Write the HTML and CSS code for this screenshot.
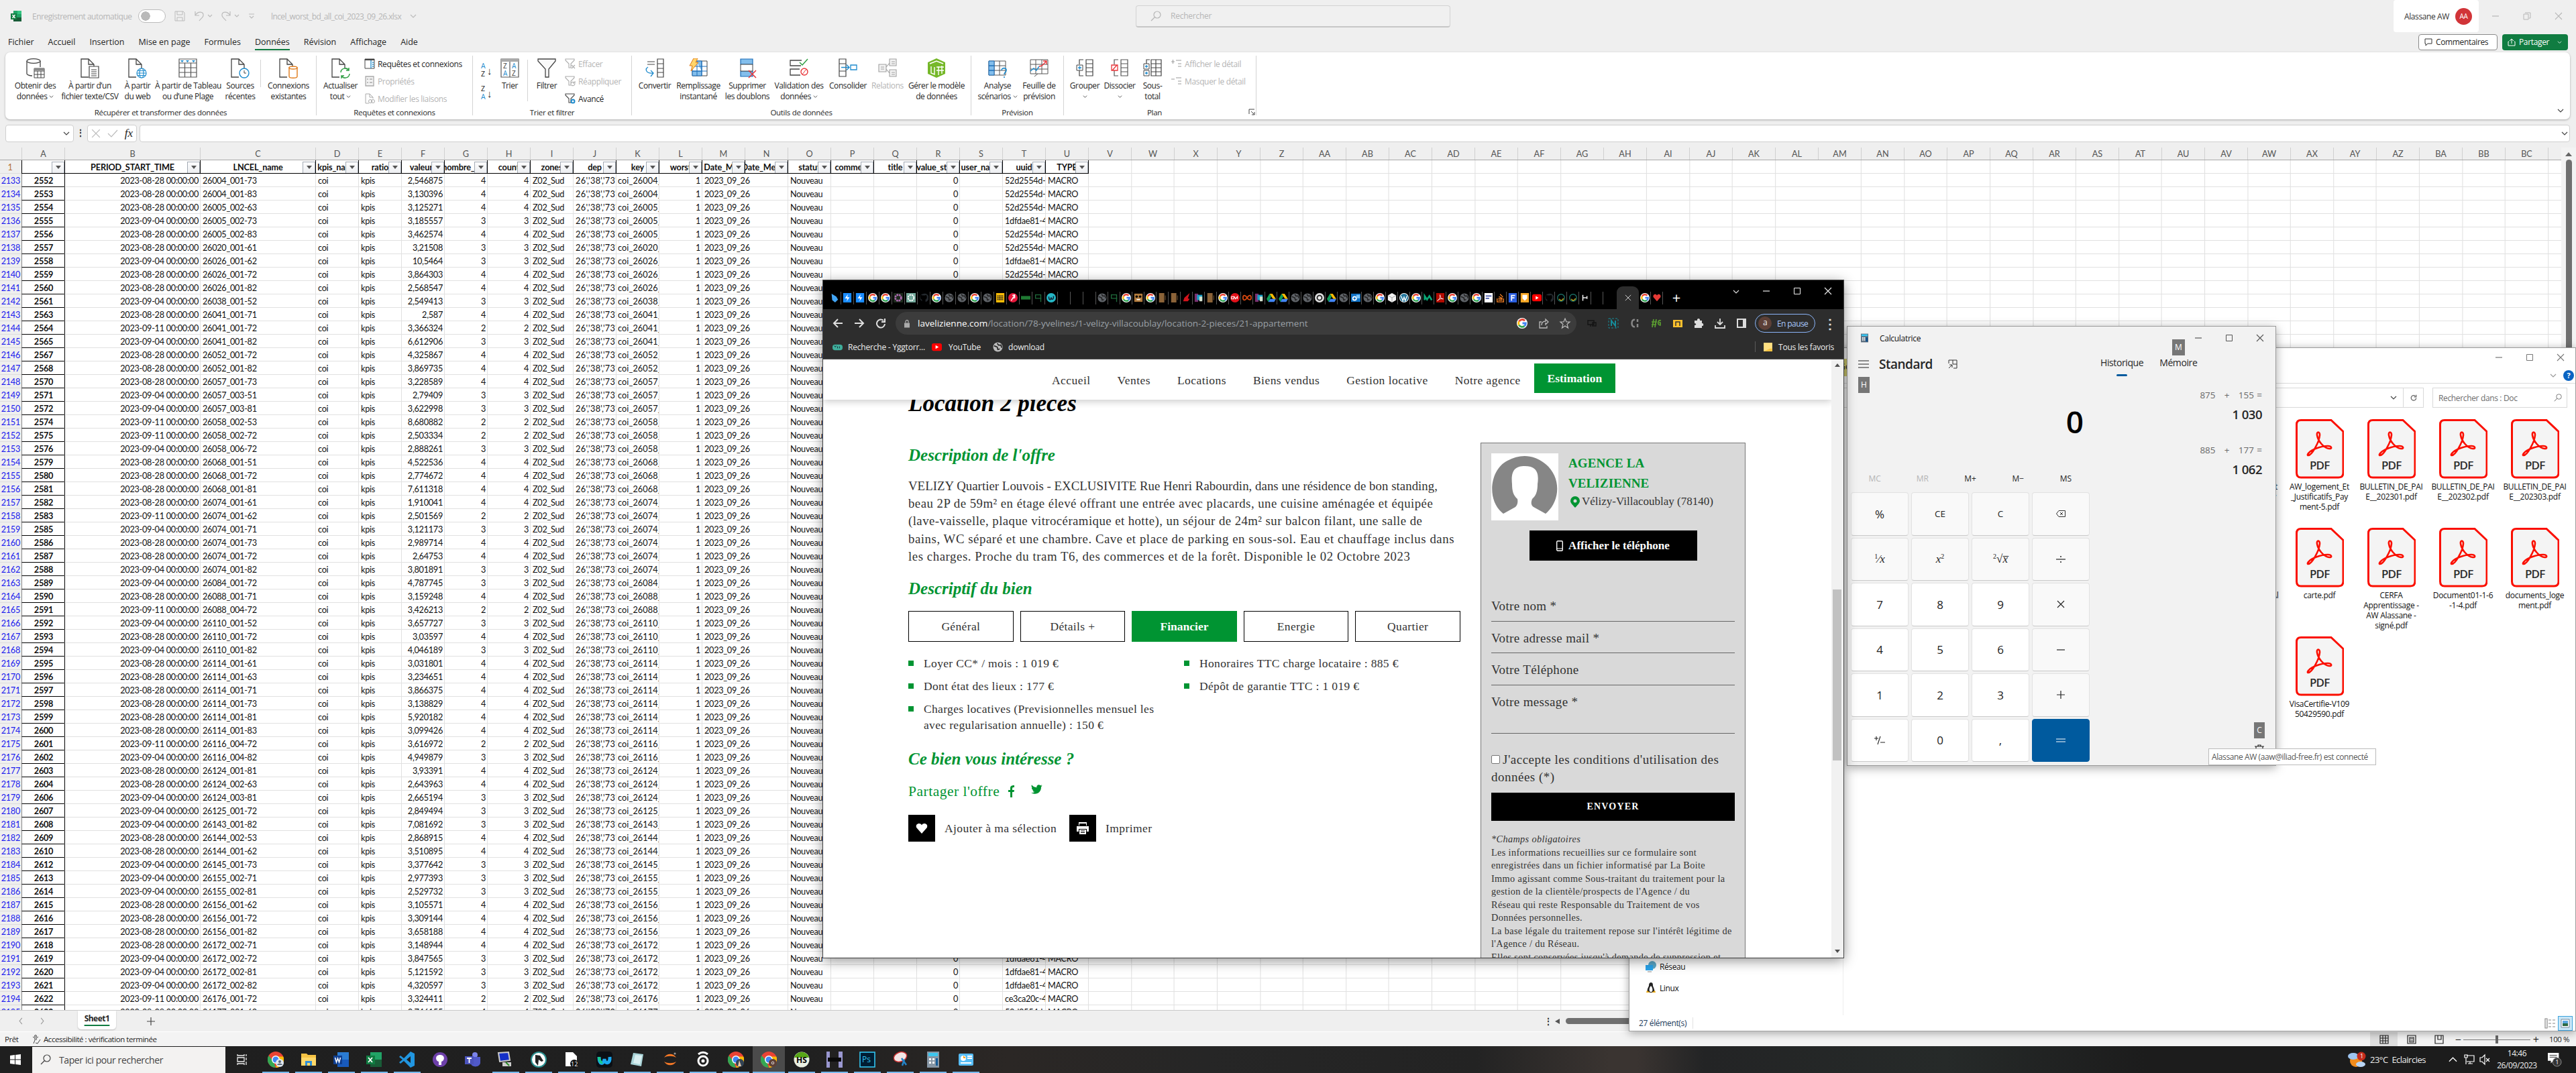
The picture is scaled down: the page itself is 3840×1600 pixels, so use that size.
FILE: index.html
```html
<!DOCTYPE html>
<html lang="fr">
<head>
<meta charset="utf-8">
<title>Bureau</title>
<link rel="stylesheet" href="styles.css">
</head>
<body>
<svg class="defs" aria-hidden="true">
<defs>
<symbol id="chev" viewBox="0 0 10 6"><path d="M1 1l4 4 4-4" fill="none" stroke="currentColor" stroke-width="1.2"/></symbol>
<symbol id="doc" viewBox="0 0 28 30"><path d="M12 28H1V1h11l8 8v6M12 1v8h8" fill="none" stroke="#444" stroke-width="1.3"/></symbol>
<symbol id="getdata" viewBox="0 0 28 30"><path d="M9 26C4 26 1 24 1 23V4m20 9V4" fill="none" stroke="#444" stroke-width="1.3"/><ellipse cx="11" cy="4" rx="10" ry="3.3" fill="#fafafa" stroke="#444" stroke-width="1.3"/><path d="M12 15h15v14H12zM12 19h15M12 24h15M17 19v10M22 19v10" fill="#fff" stroke="#444"/><path d="M12 15h15v3H12z" fill="#888"/></symbol>
<symbol id="csv" viewBox="0 0 28 30"><use href="#doc"/><path d="M13 12h14v17H13z" fill="#fff" stroke="#444" stroke-width="1.2"/><path d="M16 17h8M16 20h8M16 23h8M16 26h8" stroke="#444"/></symbol>
<symbol id="web" viewBox="0 0 28 30"><use href="#doc"/><g fill="#fff" stroke="#1e8bcd" stroke-width="1.2"><circle cx="20" cy="22" r="7"/><ellipse cx="20" cy="22" rx="3" ry="7"/><path d="M13 22h14M14 18.500h12M14 25.500h12" fill="none"/></g></symbol>
<symbol id="table" viewBox="0 0 28 30"><path d="M1 1h26v27H1zM1 7h26M1 14h26M1 21h26M9.500 7v21M18.500 7v21" fill="#fff" stroke="#555" stroke-width="1.2"/><path d="M3 3h5l-2.500 3zM11 3h5l-2.500 3zM20 3h5l-2.500 3z" fill="#1e8bcd"/></symbol>
<symbol id="recent" viewBox="0 0 28 30"><use href="#doc"/><circle cx="20" cy="22" r="7" fill="#fff" stroke="#1e8bcd" stroke-width="1.4"/><path d="M20 18v4h3" fill="none" stroke="#444"/></symbol>
<symbol id="conn" viewBox="0 0 28 30"><use href="#doc"/><path d="M15 14v13c0 3 12 3 12 0V14z" fill="#fff" stroke="#e07b1b" stroke-width="1.4"/><ellipse cx="21" cy="14" rx="6" ry="2" fill="#fff" stroke="#e07b1b" stroke-width="1.4"/></symbol>
<symbol id="refresh" viewBox="0 0 28 30"><use href="#doc"/><path d="M14 21a6.500 6.500 0 0 1 12-3m1 5a6.500 6.500 0 0 1-12 3M26 14v4h-4M15 30v-4h4" fill="none" stroke="#2f9e44" stroke-width="1.5"/></symbol>
<symbol id="sort" viewBox="0 0 28 30"><path d="M1 1h26v27H1zM14 5v23" fill="#fff" stroke="#555" stroke-width="1.2"/><path d="M1 1h26v4H1z" fill="#aaa"/><g font-family="Open Sans" font-size="10"><text x="4" y="15" fill="#444">Z</text><text x="4" y="26" fill="#1e8bcd">A</text><text x="17" y="15" fill="#1e8bcd">A</text><text x="17" y="26" fill="#444">Z</text></g></symbol>
<symbol id="funnel" viewBox="0 0 28 30"><path d="M1 1h26v3L17 16v12h-5V16L1 4z" fill="#fafafa" stroke="#444" stroke-width="1.3"/></symbol>
<symbol id="convert" viewBox="0 0 28 30"><path d="M18 1h9v27h-9zM18 8h9M18 15h9M18 21h9M3 5h11M3 9h11" fill="none" stroke="#444" stroke-width="1.2"/><path d="M4 13c-5 3-3 10 7 9m-3-4l4 4-4 5" fill="none" stroke="#1e8bcd" stroke-width="1.3"/></symbol>
<symbol id="flash" viewBox="0 0 28 30"><path d="M5 4h22v22H5z" fill="#fff" stroke="#444"/><path d="M11 4h8v22H5v-7h14" fill="#83beec" stroke="#1e6fb8"/><path d="M5 12h22M5 19h22M12 4v22M19 4v22" stroke="#1e6fb8"/><path d="M7 0h6l-3 6h4L3 19l2-8H1z" fill="#ffd56b" stroke="#e07b1b"/></symbol>
<symbol id="dups" viewBox="0 0 28 30"><path d="M4 1h18v8H4zM4 19h18v8H4z" fill="#83beec" stroke="#1e6fb8" stroke-width="1.2"/><path d="M4 9h18v10H4z" fill="#fff" stroke="#444"/><path d="M16 18l11 11M27 18L16 29" stroke="#e8363a" stroke-width="1.5"/></symbol>
<symbol id="valid" viewBox="0 0 28 30"><path d="M18 3H1v8h16M15 16H1v9h15" fill="none" stroke="#444" stroke-width="1.3"/><path d="M15 6l4 4 8-9" fill="none" stroke="#2f9e44" stroke-width="1.5"/><circle cx="22" cy="20" r="5" fill="#fff" stroke="#e8363a" stroke-width="1.4"/><path d="M19 24l6-8" stroke="#e8363a"/></symbol>
<symbol id="conso" viewBox="0 0 28 30"><path d="M1 1h10v26H1zM1 8h10M1 19h10" fill="#fff" stroke="#444" stroke-width="1.2"/><path d="M18 10h9v7h-9z" fill="#fff" stroke="#1e8bcd" stroke-width="1.3"/><path d="M4 13.500h12m-4-4l4 4-4 4" fill="none" stroke="#1e8bcd" stroke-width="1.3"/></symbol>
<symbol id="rel" viewBox="0 0 28 30"><path d="M1 9h11v11H1zM17 1h10v10H17zM17 17h10v10H17zM12 13l5-6M12 16l5 6M4 13h5M4 16h5M20 5h5M20 8h5M20 21h5M20 24h5" fill="#f2f2f2" stroke="#a0a0a0" stroke-width="1.1"/></symbol>
<symbol id="model" viewBox="0 0 28 30"><path d="M14 0l13 6v17l-13 6-13-6V6z" fill="#76b82a"/><path d="M4 8l10-4 10 4M6 12v10l5 2V13M17 12v13M22 11v12M14 18h11M14 13h11" fill="none" stroke="#fff" stroke-width="1.4"/></symbol>
<symbol id="whatif" viewBox="0 0 28 30"><path d="M1 4h25v21H1zM1 11h25M1 18h25M9 4v21M17 4v21" fill="#fff" stroke="#555"/><path d="M1 4h8v7H1zM1 11h8v7H1zM1 18h8v7H1z" fill="#83beec" stroke="#1e6fb8"/><path d="M20 18c0-5 8-4 7 0-.5 3-3 3-3 6M24 27v2" fill="none" stroke="#1e8bcd" stroke-width="1.6"/></symbol>
<symbol id="forecast" viewBox="0 0 28 30"><path d="M1 2h26v21H1zM1 9h26M1 16h26M9 2v21M18 2v21M12 23l-5 4" fill="#fff" stroke="#555"/><path d="M1 19l5-4 4 3 4-6" fill="none" stroke="#1e8bcd" stroke-width="1.4"/><path d="M14 12l4-1 7-7m-5 0h5v5" fill="none" stroke="#e8363a" stroke-width="1.4"/></symbol>
<symbol id="group" viewBox="0 0 28 30"><path d="M16 2h10v24H16zM16 8h10M16 14h10M16 20h10M12 2H6v7M6 18v8h6" fill="none" stroke="#444" stroke-width="1.2"/><path d="M2 10h9v8H2z" fill="#fff" stroke="#444"/><path d="M4 14h5M6.500 11.500v5" stroke="#1e8bcd" stroke-width="1.3"/></symbol>
<symbol id="ungroup" viewBox="0 0 28 30"><path d="M16 2h10v24H16zM16 8h10M16 14h10M16 20h10M12 2H6v7M6 18v8h6" fill="none" stroke="#555" stroke-width="1.2"/><path d="M2 10h9v8H2zM3 18l7-8" fill="#fff" stroke="#e8363a" stroke-width="1.3"/></symbol>
<symbol id="subt" viewBox="0 0 28 30"><path d="M12 2h15v24H12zM12 8h15M12 14h15M12 20h15M19 2v24M10 2H5v6" fill="none" stroke="#444" stroke-width="1.2"/><path d="M1 8h8v8H1zM1 18h8v8H1z" fill="#fff" stroke="#444"/><path d="M3 12h4M5 10v4M3 22h4M5 20v4" stroke="#1e8bcd" stroke-width="1.3"/></symbol>
<symbol id="sfun" viewBox="0 0 16 16"><path d="M1 1h13v2L9 8v6H6V8L1 3z" fill="none" stroke="currentColor"/></symbol>
<symbol id="google" viewBox="0 0 16 16"><circle cx="8" cy="8" r="8" fill="#fff"/><g fill="none" stroke-width="2.800"><path d="M12 4.200A5.400 5.400 0 0 0 3.300 5.400" stroke="#ea4335"/><path d="M3.300 5.400a5.400 5.400 0 0 0 0 5.200" stroke="#fbbc05"/><path d="M3.300 10.600a5.400 5.400 0 0 0 8.100 1.600" stroke="#34a853"/><path d="M11.400 12.200A5.400 5.400 0 0 0 13.400 8H8.500" stroke="#4285f4"/></g></symbol>
<symbol id="globe" viewBox="0 0 16 16"><circle cx="8" cy="8" r="7.500" fill="currentColor"/><path d="M2 6l5 2 1 4 3-1M7 2l2 3 4 0 1 4" fill="none" stroke="#222" stroke-width="1.800"/></symbol>
<symbol id="bolt" viewBox="0 0 16 16"><path d="M1 0h14v16H1z" fill="#1a8cff"/><path d="M9 2L4 9h4l-1 5 5-7H8z" fill="#fff"/></symbol>
<symbol id="dart" viewBox="0 0 16 16"><path d="M3 1l8 5 3 5-5 5-5-4z" fill="#42a5f5"/></symbol>
<symbol id="gptd" viewBox="0 0 16 16"><path d="M0 0h16v16H0z" fill="#1d2b1d"/><circle cx="8" cy="8" r="5" fill="none" stroke="#b06ab3" stroke-width="3" stroke-dasharray="3 1"/></symbol>
<symbol id="gptl" viewBox="0 0 16 16"><path d="M0 0h16v16H0z" fill="#74aa9c"/><circle cx="8" cy="8" r="5" fill="none" stroke="#fff" stroke-width="2" stroke-dasharray="3 1"/></symbol>
<symbol id="octo" viewBox="0 0 16 16"><path d="M8 1a7 7 0 0 0-3 13v-3C1 10 2 4 4 3l2 1h4l2-1c2 2 2 7-1 8v4a7 7 0 0 0-3-14z" fill="#24292e"/></symbol>
<symbol id="yel" viewBox="0 0 16 16"><path d="M1 0h14v16H1z" fill="#fbbc05"/><path d="M3 5h10M3 8h10M3 11h10" stroke="#222" stroke-width="2" stroke-dasharray="2 .7"/></symbol>
<symbol id="redp" viewBox="0 0 16 16"><circle cx="8" cy="8" r="8" fill="#e6173a"/><path d="M5 13l6-10M7 4l4-1 0 5-4 1" stroke="#fff" stroke-width="1.600" fill="none"/></symbol>
<symbol id="grn" viewBox="0 0 16 16"><path d="M0 5h16v6H0z" fill="#1f7a33"/></symbol>
<symbol id="grl" viewBox="0 0 16 16"><path d="M13 9H3V3h9v12" fill="none" stroke="#1f6b3b" stroke-width="1.500"/></symbol>
<symbol id="wteal" viewBox="0 0 16 16"><circle cx="8" cy="8" r="8" fill="#25b7c6"/><path d="M4 6c0 8 4 5 4 1 0 5 4 5 4-2" fill="none" stroke="#123" stroke-width="1.800"/></symbol>
<symbol id="bear" viewBox="0 0 16 16"><path d="M1 1h14v14H1z" fill="#b07a3c"/><circle cx="5" cy="6" r="2"/><circle cx="11" cy="6" r="2"/><path d="M5 11h6" stroke="#fff" stroke-width="2"/></symbol>
<symbol id="brown" viewBox="0 0 16 16"><path d="M2 0h9v16H2z" fill="#8b6338"/><path d="M11 4h3v8h-3" fill="#3a2b1b"/></symbol>
<symbol id="flame" viewBox="0 0 16 16"><path d="M13 0L4 8l-2 6h8l3-4-3-1z" fill="#d4141c"/></symbol>
<symbol id="opera" viewBox="0 0 16 16"><circle cx="8" cy="8" r="8" fill="#e3111a"/><path d="M2 6h4v4H2zM7 6l2 4 3-4v4" fill="none" stroke="#fff" stroke-width="1.300"/></symbol>
<symbol id="inf" viewBox="0 0 16 16"><path d="M8 8C4 2 1 4 1 8s3 6 7 0 7-4 7 0-4 5-7 0z" fill="none" stroke="#d9480f" stroke-width="2"/></symbol>
<symbol id="pics" viewBox="0 0 16 16"><path d="M1 1h6v14H1z" fill="#79306f"/><path d="M5 3h9v9H5z" fill="#1aa3c9"/><path d="M9 6h5v8H9z" fill="#d5e3d0"/></symbol>
<symbol id="drive" viewBox="0 0 16 16"><path d="M5 1h5l6 9h-5z" fill="#fbbc05"/><path d="M5 1L0 10l3 5 5-9z" fill="#0f9d58"/><path d="M3 15h10l3-5H6z" fill="#4285f4"/></symbol>
<symbol id="chrome" viewBox="0 0 16 16"><circle cx="8" cy="8" r="8" fill="#ea4335"/><path d="M1 4l5 6 2 6A8 8 0 0 1 1 4z" fill="#34a853"/><path d="M8 16l3-7-1-4h5.500A8 8 0 0 1 8 16z" fill="#fbbc05"/><circle cx="8" cy="8" r="4" fill="#fff"/><circle cx="8" cy="8" r="3" fill="#4285f4"/></symbol>
<symbol id="chromeg" viewBox="0 0 16 16"><circle cx="8" cy="8" r="8" fill="#ddd"/><circle cx="8" cy="8" r="5" fill="#222"/><circle cx="8" cy="8" r="3" fill="#eee"/></symbol>
<symbol id="outl" viewBox="0 0 16 16"><path d="M0 1h16v14H0z" fill="#1072c6"/><circle cx="6" cy="9" r="3" fill="none" stroke="#fff" stroke-width="2"/><path d="M9 3h6v6H9z" fill="#7fc4f5"/></symbol>
<symbol id="box" viewBox="0 0 16 16"><path d="M8 0l7 4v8l-7 4-7-4V4z" fill="#f4f4f4"/><path d="M8 8v8M1 4l7 4 7-4" stroke="#999" fill="none"/></symbol>
<symbol id="wp" viewBox="0 0 16 16"><circle cx="8" cy="8" r="8" fill="#fff"/><circle cx="8" cy="8" r="7" fill="#21759b"/><path d="M3 5l3 8 2-6 2 6 3-8" fill="none" stroke="#fff" stroke-width="1.600"/></symbol>
<symbol id="mgr" viewBox="0 0 16 16"><path d="M2 12V5l4 6 4-6 4 7" fill="none" stroke="#0aa574" stroke-width="3"/></symbol>
<symbol id="acro" viewBox="0 0 16 16"><path d="M1 0h14v16H1z" fill="#b30b00"/><path d="M3 13c4-2 5-6 4.500-10C8 8 10 10 13 10c-4-1-7 0-10 3z" fill="none" stroke="#fff"/></symbol>
<symbol id="white" viewBox="0 0 16 16"><path d="M1 0h14v16H1z" fill="#fff"/><path d="M3 5h10M3 9h6" stroke="#45a" stroke-width="2"/></symbol>
<symbol id="stack" viewBox="0 0 16 16"><path d="M2 9v6h11V9M4 12h7M4 9l7 1M5 6l6 3M7 2l5 5" fill="none" stroke="#f48024" stroke-width="1.500"/></symbol>
<symbol id="fblue" viewBox="0 0 16 16"><path d="M1 0h14v16H1z" fill="#2b5fe0"/><path d="M6 13V4h6M6 8h5" fill="none" stroke="#fff" stroke-width="2"/></symbol>
<symbol id="shield" viewBox="0 0 16 16"><path d="M1 0h14v16H1z" fill="#f9a825"/><path d="M4 3h8v6l-4 4-4-4z" fill="#fff"/></symbol>
<symbol id="yt" viewBox="0 0 16 16"><rect y="2" width="16" height="12" rx="3" fill="#f00"/><path d="M6 5l5 3-5 3z" fill="#fff"/></symbol>
<symbol id="ring" viewBox="0 0 16 16"><circle cx="8" cy="8" r="6" fill="none" stroke="#1b6e63" stroke-width="1.600"/><path d="M5 10c2 4 6 3 7-1" fill="none" stroke="#e0c020" stroke-width="1.500"/></symbol>
<symbol id="hlogo" viewBox="0 0 16 16"><path d="M4 3v10M4 8h6M11 5v5" stroke="#eee" stroke-width="1.800"/></symbol>
<symbol id="heart" viewBox="0 0 16 16"><path d="M8 14L2 7c-2-4 4-7 6-3 2-4 8-1 6 3z" fill="#e53935"/></symbol>
<symbol id="pdf" viewBox="0 0 72 89"><path d="M8 1.500h45l18 17V80q0 7-7 7H8q-6.500 0-6.500-7V8q0-6.500 6.500-6.500z" fill="#f4f4f4" stroke="#fb0f00" stroke-width="3"/><path d="M19 54c5 0 16-19 17-30 .4-6-5-6-4 0 1.500 9 10 19 18 20 5 .5 4-4-2-4-11 0-25 6-28 10-2 2-3 4-1 4z" fill="none" stroke="#fb0f00" stroke-width="2.600"/><text x="36" y="75" text-anchor="middle" font-family="Open Sans" font-size="17" font-weight="600" textLength="30" fill="#2c2c2c">PDF</text></symbol>
<symbol id="back" viewBox="0 0 16 16"><path d="M15 8H2m6-6L2 8l6 6" fill="none" stroke="currentColor" stroke-width="2"/></symbol>
<symbol id="reload" viewBox="0 0 16 16"><path d="M14 9A6 6 0 1 1 12 4M14 1v5H9" fill="none" stroke="currentColor" stroke-width="2"/></symbol>
<symbol id="x" viewBox="0 0 12 12"><path d="M1 1l10 10M11 1L1 11" stroke="currentColor" stroke-width="1.100"/></symbol>
<symbol id="min" viewBox="0 0 12 12"><path d="M1 6h10" stroke="currentColor" stroke-width="1.200"/></symbol>
<symbol id="max" viewBox="0 0 12 12"><path d="M1.500 1.500h9v9h-9z" stroke="currentColor" fill="none"/></symbol>
<symbol id="mag" viewBox="0 0 16 16"><circle cx="10" cy="6" r="5" fill="none" stroke="currentColor" stroke-width="1.200"/><path d="M6.500 9.500L1 15" stroke="currentColor" stroke-width="1.300"/></symbol>
</defs>
</svg>

<div class="desktop">
<section class="excel">
  <header class="xl-title">
    <div class="xl-quick">
      <svg class="xl-logo" viewBox="0 0 16 16"><path d="M4 0h12v16H4z" fill="#21a366"/><path d="M10 0h6v5h-6z" fill="#33c481"/><path d="M4 10h12v6H4z" fill="#185c37"/><path d="M0 4h9v9H0z" fill="#107c41"/><path d="M2.500 6l4 5M6.500 6l-4 5" stroke="#fff" stroke-width="1.400"/></svg>
      <span class="auto">Enregistrement automatique</span>
      <i class="toggle"></i>
      <svg class="q-save" viewBox="0 0 16 16"><path d="M1 1h12l2 2v12H1zM4 1v5h8V1M4 15V10h8v5" fill="none" stroke="#bbb"/></svg>
      <svg class="q-undo" viewBox="0 0 26 16"><path d="M1 1v6h6M1 7C5 0 14 1 13 7c0 3-5 6-6 8M20 6l3 3 3-3" fill="none" stroke="#bbb" stroke-width="1.200"/></svg>
      <svg class="q-redo" viewBox="0 0 26 16"><path d="M13 1v6H7M13 7C9 0 0 1 1 7c0 3 5 6 6 8M20 6l3 3 3-3" fill="none" stroke="#bbb" stroke-width="1.200"/></svg>
      <svg class="q-more" viewBox="0 0 8 8"><path d="M0 1h8M1 4l3 3 3-3" fill="none" stroke="#bbb" stroke-width="1.200"/></svg>
      <span class="fname">lncel_worst_bd_all_coi_2023_09_26.xlsx</span>
      <svg class="c10 gr"><use href="#chev"/></svg>
    </div>
    <div class="xl-search"><svg class="s16"><use href="#mag"/></svg><span>Rechercher</span></div>
    <div class="xl-user"><span>Alassane AW</span><b>AA</b></div>
    <div class="xl-ctl"><svg class="s12"><use href="#min"/></svg><svg class="s12" viewBox="0 0 12 12"><path d="M1 3h7v8H1zM3 1h8v8H9" fill="none" stroke="currentColor"/></svg><svg class="s12"><use href="#x"/></svg></div>
  </header>
  <nav class="xl-tabs">
    <span>Fichier</span><span>Accueil</span><span>Insertion</span><span>Mise en page</span><span>Formules</span><span class="on">Données</span><span>Révision</span><span>Affichage</span><span>Aide</span>
    <div class="xl-share"><button class="cmt"><svg viewBox="0 0 12 12"><path d="M1 1h10v7H5l-3 3V8H1z" fill="none" stroke="#333"/></svg>Commentaires</button><button class="shr"><svg viewBox="0 0 12 12"><path d="M6 1v7M3 4l3-3 3 3M2 5H1v6h10V5h-1" fill="none" stroke="#fff"/></svg>Partager<svg class="c7"><use href="#chev"/></svg></button></div>
  </nav>
  <div class="ribbon">
    <div class="grp g1"><div class="items">
      <div class="b b-get"><svg><use href="#getdata"/></svg>Obtenir des<br>données <svg class="dd"><use href="#chev"/></svg></div>
      <div class="b b-csv"><svg><use href="#csv"/></svg>À partir d’un<br>fichier texte/CSV</div>
      <div class="b b-web"><svg><use href="#web"/></svg>À partir<br>du web</div>
      <div class="b b-tab"><svg><use href="#table"/></svg>À partir de Tableau<br>ou d’une Plage</div>
      <div class="b b-rec"><svg><use href="#recent"/></svg>Sources<br>récentes</div>
      <i class="vs short"></i>
      <div class="b b-con"><svg><use href="#conn"/></svg>Connexions<br>existantes</div>
    </div><p>Récupérer et transformer des données</p></div>
    <div class="grp g2"><div class="items">
      <div class="b b-ref"><svg><use href="#refresh"/></svg>Actualiser<br>tout <svg class="dd"><use href="#chev"/></svg></div>
      <div class="list">
        <span><svg viewBox="0 0 16 16"><path d="M1 1h14v14H1z" fill="#fff" stroke="#444"/><path d="M1 1h14v2H1z" fill="#444"/><path d="M10 3v12M12 6h2M12 9h2M12 12h2" stroke="#1e8bcd" stroke-width="1.300"/></svg>Requêtes et connexions</span>
        <span class="off"><svg viewBox="0 0 16 16"><path d="M2 1h12v14H2zM4 5h2M8 5h4M4 10h2M8 10h4" fill="#f2f2f2" stroke="#aaa" stroke-width="1.300"/></svg>Propriétés</span>
        <span class="off"><svg viewBox="0 0 16 16"><path d="M7 15H2V1h6l5 5v2M8 1v5h5" fill="none" stroke="#aaa"/><circle cx="9" cy="12" r="2.500" fill="none" stroke="#aaa"/><circle cx="13" cy="12" r="2.500" fill="none" stroke="#aaa"/></svg>Modifier les liaisons</span>
      </div>
    </div><p>Requêtes et connexions</p></div>
    <div class="grp g3"><div class="items">
      <div class="az"><div><em>A</em><br>Z</div><u>↓</u><div>Z<br><em>A</em></div><u>↓</u></div>
      <div class="b b-sort"><svg><use href="#sort"/></svg>Trier</div>
      <i class="vs mid"></i>
      <div class="b b-fil"><svg><use href="#funnel"/></svg>Filtrer</div>
      <div class="list">
        <span class="off"><svg viewBox="0 0 16 16"><path d="M1 1h13v2L9 8v6H6V8L1 3zM10 10l5 5M15 10l-5 5" fill="none" stroke="#aaa" stroke-width="1.100"/></svg>Effacer</span>
        <span class="off"><svg viewBox="0 0 16 16"><path d="M1 1h13v2L9 8v6H6V8L1 3zM9 12a3 3 0 0 1 5-2m1 2a3 3 0 0 1-5 2M15 8v3h-3" fill="none" stroke="#aaa" stroke-width="1.100"/></svg>Réappliquer</span>
        <span><svg viewBox="0 0 16 16"><path d="M1 1h13v2L9 8v6H6V8L1 3z" fill="none" stroke="#444" stroke-width="1.100"/><circle cx="12" cy="12" r="2.500" fill="#fff" stroke="#1e8bcd" stroke-width="2"/></svg>Avancé</span>
      </div>
    </div><p>Trier et filtrer</p></div>
    <div class="grp g4"><div class="items">
      <div class="b b-cv"><svg><use href="#convert"/></svg>Convertir</div>
      <div class="b b-fl"><svg><use href="#flash"/></svg>Remplissage<br>instantané</div>
      <div class="b b-du"><svg><use href="#dups"/></svg>Supprimer<br>les doublons</div>
      <div class="b b-va"><svg><use href="#valid"/></svg>Validation des<br>données <svg class="dd"><use href="#chev"/></svg></div>
      <div class="b b-cs"><svg><use href="#conso"/></svg>Consolider</div>
      <div class="b b-rl off"><svg><use href="#rel"/></svg>Relations</div>
      <div class="b b-md"><svg><use href="#model"/></svg>Gérer le modèle<br>de données</div>
    </div><p>Outils de données</p></div>
    <div class="grp g5"><div class="items">
      <div class="b b-an"><svg><use href="#whatif"/></svg>Analyse<br>scénarios <svg class="dd"><use href="#chev"/></svg></div>
      <div class="b b-fe"><svg><use href="#forecast"/></svg>Feuille de<br>prévision</div>
    </div><p>Prévision</p></div>
    <div class="grp g6"><div class="items">
      <div class="b b-gr"><svg><use href="#group"/></svg>Grouper<br><svg class="dd"><use href="#chev"/></svg></div>
      <div class="b b-gr"><svg><use href="#ungroup"/></svg>Dissocier<br><svg class="dd"><use href="#chev"/></svg></div>
      <div class="b b-st"><svg><use href="#subt"/></svg>Sous-<br>total</div>
      <div class="list">
        <span class="off"><svg viewBox="0 0 16 16"><path d="M0 5h5M2.500 2v6M7 3h8M10 8h5M10 12h5" stroke="#999"/></svg>Afficher le détail</span>
        <span class="off"><svg viewBox="0 0 16 16"><path d="M0 5h5M7 3h8M10 8h5M10 12h5" stroke="#999"/></svg>Masquer le détail</span>
      </div>
    </div><p>Plan</p><svg class="launch" viewBox="0 0 10 10"><path d="M1 8V1h8M4 4l5 5M9 5v4H5" fill="none" stroke="#444"/></svg></div>
    <svg class="c10 fold"><use href="#chev"/></svg>
  </div>
  <div class="fbar">
    <div class="nbox"><svg class="c10"><use href="#chev"/></svg></div>
    <span class="dots">⋮</span>
    <div class="fx"><svg class="s14"><use href="#x"/></svg><svg class="s16" viewBox="0 0 16 12"><path d="M1 6l5 5 9-10" fill="none" stroke="#bbb" stroke-width="1.200"/></svg><i>fx</i></div>
    <div class="finput"><svg class="c10"><use href="#chev"/></svg></div>
  </div>
  <div class="sheet">
    <div class="colhead" id="colhead"></div>
    <div class="rows" id="rows"></div>
    <div class="vscroll"><i class="up"></i><i class="thumb"></i></div>
  </div>
  <div class="sheets"><svg class="ar" viewBox="0 0 6 12"><path d="M5 1L1 6l4 5" fill="none" stroke="#999" stroke-width="1.200"/></svg><svg class="ar" viewBox="0 0 6 12"><path d="M1 1l4 5-4 5" fill="none" stroke="#999" stroke-width="1.200"/></svg><b>Sheet1</b><svg class="add" viewBox="0 0 12 12"><path d="M6 0v12M0 6h12" stroke="#444" stroke-width="1.200"/></svg><span class="sdots">⋮</span><i class="left"></i><i class="hthumb"></i></div>
  <footer class="status"><span class="pret">Prêt</span><svg class="acc" viewBox="0 0 14 14"><circle cx="6" cy="2" r="1.500" fill="none" stroke="#444"/><path d="M2 3l3 2v3l-2 5M10 3L7 5v3M6 12l3 1 4-6" fill="none" stroke="#444"/></svg><span class="acct">Accessibilité : vérification terminée</span>
    <div class="zoom"><span class="v on"><svg class="s14" viewBox="0 0 14 14"><path d="M1 1h12v12H1zM1 5h12M1 9h12M5 1v12M9 1v12" fill="none" stroke="#222" stroke-width="1.200"/></svg></span><span class="v"><svg class="s14" viewBox="0 0 14 14"><path d="M1 1h12v12H1zM4 4h6v7H4zM5 6h4M5 9h4" fill="none" stroke="#222" stroke-width="1.200"/></svg></span><span class="v"><svg class="s14" viewBox="0 0 14 14"><path d="M1 1h12v12H1zM5 1v6h5V1" fill="none" stroke="#222" stroke-width="1.200"/></svg></span><span class="mn">−</span><i class="track"></i><span class="pl">+</span><span class="pc">100 %</span></div>
  </footer>
</section>

<section class="explorer">
  <div class="ex-title"><svg class="s12"><use href="#min"/></svg><svg class="s12"><use href="#max"/></svg><svg class="s12"><use href="#x"/></svg></div>
  <div class="ex-help"><em>Gérer</em><svg class="c10"><use href="#chev"/></svg><b>?</b></div>
  <div class="ex-bar"><div class="addr"><svg class="c10"><use href="#chev"/></svg><span><svg class="s10"><use href="#reload"/></svg></span></div><div class="ex-search">Rechercher dans : Doc<svg class="s12"><use href="#mag"/></svg></div></div>
  <div class="ex-body">
    <div class="ex-nav">
      <span><svg viewBox="0 0 16 16"><circle cx="10" cy="6" r="6" fill="#5aa7c7"/><path d="M0 6h11v8H0z" fill="#29a3ea"/><path d="M3 16h6" stroke="#888"/></svg>Réseau</span>
      <span><svg viewBox="0 0 16 16"><path d="M8 0c-3 0-3 4-3 5-2 4-3 6-2 10h10c1-4-1-7-2-10 0-2 0-5-3-5z" fill="#222"/><path d="M8 5c-3 3-3 8-1 9h2c2-1 2-6-1-9z" fill="#fff"/><path d="M2 12l5 3H1zM14 12l-5 3h6z" fill="#e8a50c"/></svg>Linux</span>
    </div>
    <div class="files" id="files"></div>
  </div>
  <div class="ex-status"><span class="cnt">27 élément(s)</span><svg class="s16" viewBox="0 0 16 16"><path d="M1 1h3v14H1zM6 3h4M12 3h4M6 8h4M12 8h4M6 13h4M12 13h4" fill="none" stroke="#888" stroke-width="1.200"/></svg><span class="sel"><svg class="s14" viewBox="0 0 14 14"><path d="M1 1h12v12H1z" fill="#fff" stroke="#789"/><path d="M3 3h8v4H3z" fill="#5aa7e0"/><path d="M3 7h8v4H3z" fill="#2d6b45"/></svg></span></div>
</section>

<section class="calc">
  <div class="ca-title"><svg class="ca-ico" viewBox="0 0 12 14"><path d="M0 0h12v14H0z" fill="#5c6f80"/><path d="M1 1h10v3H1z" fill="#36c5f0"/><path d="M2 6h2v2H2zM5 6h2v2H5zM2 9h2v2H2zM5 9h2v2H5z" fill="#fff"/><path d="M8 6h3v7H8z" fill="#0d4f8c"/></svg><span>Calculatrice</span><svg class="s12 first"><use href="#min"/></svg><svg class="s12"><use href="#max"/></svg><svg class="s12"><use href="#x"/></svg></div>
  <div class="ca-main">
    <div class="ca-left">
      <div class="ca-mode"><svg class="s16" viewBox="0 0 16 12"><path d="M0 1h16M0 6h16M0 11h16" stroke="#222" stroke-width="1.100"/></svg><b>Standard</b><svg class="s14" viewBox="0 0 14 14"><path d="M1 6V1h12v12H8M7 1v6h6M1 13l5-5M2 8h4v4" fill="none" stroke="#333"/></svg></div>
      <div class="ca-disp">0</div>
      <div class="ca-mem"><span class="off">MC</span><span class="off">MR</span><span>M+</span><span>M−</span><span>MS</span></div>
      <div class="keys">
        <span class="op">%</span><span class="op sm">CE</span><span class="op sm">C</span><span class="op"><svg class="s14" viewBox="0 0 14 10"><path d="M4 .5h9.500v9H4L.5 5zM6 3l4 4M10 3L6 7" fill="none" stroke="#333"/></svg></span>
        <span class="op it"><sup>1</sup>⁄x</span><span class="op it">x<sup>2</sup></span><span class="op it"><sup>2</sup>√x̅</span><span class="op"><svg class="s14" viewBox="0 0 14 14"><path d="M0 7h14" stroke="#222" stroke-width="1.200"/><circle cx="7" cy="3" r="1" fill="#222"/><circle cx="7" cy="11" r="1" fill="#222"/></svg></span>
        <span>7</span><span>8</span><span>9</span><span class="op"><svg class="s12"><use href="#x"/></svg></span>
        <span>4</span><span>5</span><span>6</span><span class="op"><svg class="s14" viewBox="0 0 14 14"><path d="M1 7h12" stroke="#222" stroke-width="1.200"/></svg></span>
        <span>1</span><span>2</span><span>3</span><span class="op"><svg class="s14" viewBox="0 0 14 14"><path d="M1 7h12M7 1v12" stroke="#222" stroke-width="1.200"/></svg></span>
        <span><svg class="s16" viewBox="0 0 16 12"><path d="M0 3h6M3 0v6M9 0L5 12M9 9h7" stroke="#222" stroke-width="1.100"/></svg></span><span>0</span><span>,</span><span class="eq"><svg class="s14" viewBox="0 0 14 14"><path d="M0 5h14M0 9h14" stroke="#fff" stroke-width="1.200"/></svg></span>
      </div>
    </div>
    <div class="ca-hist">
      <div class="ca-tabs"><span class="on">Historique</span><span>Mémoire</span></div>
      <p>875 &nbsp; + &nbsp; 155 =</p><strong>1 030</strong>
      <p>885 &nbsp; + &nbsp; 177 =</p><strong>1 062</strong>
    </div>
  </div>
  <svg class="trash" viewBox="0 0 14 14"><path d="M0 3h14M5 3V1h4v2M2 3v11h10V3" fill="none" stroke="#222" stroke-width="1.200"/></svg>
  <i class="key k-m">M</i><i class="key k-h">H</i><i class="key k-c">C</i>
</section>
<div class="tip">Alassane AW (aaw@iliad-free.fr) est connecté</div>

<section class="chrome">
  <div class="tabs" id="tabs"><div class="wc"><svg class="c10"><use href="#chev"/></svg><svg class="s12"><use href="#min"/></svg><svg class="s12"><use href="#max"/></svg><svg class="s12"><use href="#x"/></svg></div></div>
  <div class="tool">
    <svg class="s16"><use href="#back"/></svg><svg class="s16 flip"><use href="#back"/></svg><svg class="s16"><use href="#reload"/></svg>
    <div class="url"><svg class="lock" viewBox="0 0 10 12"><path d="M1 5h8v7H1z" fill="#aaa"/><path d="M3 5V3a2 2 0 0 1 4 0v2" fill="none" stroke="#aaa" stroke-width="1.300"/></svg><span><b>lavelizienne.com</b>/location/78-yvelines/1-velizy-villacoublay/location-2-pieces/21-appartement</span>
      <svg class="s16 g"><use href="#google"/></svg><svg class="s16" viewBox="0 0 16 16"><path d="M5 6H2v9h11v-3M5 11c0-5 3-6 6-6V2l4 4-4 4V7" fill="none" stroke="#bbb" stroke-width="1.300"/></svg><svg class="s16" viewBox="0 0 16 16"><path d="M8 1l2 5h5l-4 3.500 1.500 5.500L8 12l-4.500 3L5 9.500 1 6h5z" fill="none" stroke="#bbb" stroke-width="1.200"/></svg></div>
    <div class="exts">
      <svg class="s14" viewBox="0 0 14 14"><path d="M1 3h9v6H1zM5 9v3M8 6h5v5H8z" fill="none" stroke="#151515" stroke-width="1.500"/></svg>
      <svg class="s16" viewBox="0 0 16 16"><path d="M1 1h14v14H1z" fill="none" stroke="#168c99" stroke-dasharray="3 2"/><path d="M5 12V4l6 8V4" fill="none" stroke="#168c99" stroke-width="2"/></svg>
      <svg class="s14" viewBox="0 0 14 14"><path d="M7 2C1 0 1 14 7 12M11 1v4M11 8v5" fill="none" stroke="#888" stroke-width="2.500"/></svg>
      <svg class="s16" viewBox="0 0 16 16"><path d="M4 2L2 14M8 2L6 14M1 6h8M1 10h7M15 4c-5-2-6 7-1 7V7h-2" fill="none" stroke="#5c9e31" stroke-width="1.700"/></svg>
      <svg class="s14" viewBox="0 0 14 14"><path d="M0 2h14v11H0z" fill="#fbc02d"/><path d="M4 11V5h6v6" fill="none" stroke="#333" stroke-width="1.500"/></svg>
      <svg class="s14" viewBox="0 0 14 14"><path d="M1 3h4c-1-4 5-4 4 0h3v4c3-1 3 5 0 4v3H1v-4c3 0 3-3 0-3z" fill="#ddd"/></svg>
      <svg class="s16" viewBox="0 0 16 16"><path d="M8 1v9M4 6l4 4 4-4M1 11v4h14v-4" fill="none" stroke="#ddd" stroke-width="1.800"/></svg>
      <svg class="s14" viewBox="0 0 14 14"><path d="M1 1h12v12H1z" fill="none" stroke="#ddd" stroke-width="2"/><path d="M9 1h4v12H9z" fill="#ddd"/></svg>
    </div>
    <div class="prof"><i>a</i>En pause</div><span class="menu">⋮</span>
  </div>
  <div class="marks"><svg viewBox="0 0 16 16"><rect y="4" width="16" height="9" rx="4" fill="#3fae9b"/><path d="M3 6l1.500 2L6 6M8 10V7M11 10V7" stroke="#123" fill="none"/></svg><span class="m1">Recherche - Yggtorr...</span><svg><use href="#yt"/></svg><span class="m2">YouTube</span><svg class="lg"><use href="#globe"/></svg><span>download</span>
    <div class="fav"><svg viewBox="0 0 14 14"><path d="M1 1h12v12H1z" fill="#ffe082"/><path d="M10 9h3v4H1" fill="#f6c344"/></svg>Tous les favoris</div></div>
  <div class="page">
    <nav class="site"><span>Accueil</span><span>Ventes</span><span>Locations</span><span>Biens vendus</span><span>Gestion locative</span><span>Notre agence</span><b>Estimation</b></nav>
    <div class="cols">
      <main>
        <h1>Location 2 pièces</h1>
        <h2>Description de l'offre</h2>
        <p class="desc"><span class="l1">VELIZY Quartier Louvois - EXCLUSIVITE Rue Henri Rabourdin, dans une résidence de bon standing,</span><br><span class="l2">beau 2P de 59m² en étage élevé offrant une entrée avec placards, une cuisine aménagée et équipée</span><br><span class="l3">(lave-vaisselle, plaque vitrocéramique et hotte), un séjour de 24m² sur balcon filant, une salle de</span><br><span class="l4">bains, WC séparé et une chambre. Cave et place de parking en sous-sol. Eau et chauffage inclus dans</span><br><span class="l5">les charges. Proche du tram T6, des commerces et de la forêt. Disponible le 02 Octobre 2023</span></p>
        <h2>Descriptif du bien</h2>
        <div class="ptabs"><span>Général</span><span>Détails +</span><span class="on">Financier</span><span>Energie</span><span>Quartier</span></div>
        <div class="feat"><ul><li>Loyer CC* / mois : 1 019 €</li><li>Dont état des lieux : 177 €</li><li>Charges locatives (Previsionnelles mensuel les<br>avec regularisation annuelle) : 150 €</li></ul><ul><li>Honoraires TTC charge locataire : 885 €</li><li>Dépôt de garantie TTC : 1 019 €</li></ul></div>
        <h2>Ce bien vous intéresse ?</h2>
        <div class="share">Partager l'offre<svg class="fb" viewBox="0 0 10 18"><path d="M3 18V10H0V7h3V4c0-3 2-4 6-4v3c-2 0-3 0-3 2v2h3l-.5 3H6v8z" fill="#009432"/></svg><svg class="tw" viewBox="0 0 18 15"><path d="M18 2l-2 1 1-2-2 1c-3-3-7 0-6 3C6 5 3 4 1 1c-1 2 0 4 1 5L1 5.500C1 8 2 9 4 9.500H2.500C3 11 4 12 6 12c-2 1-4 2-6 1 7 5 16 1 16-9z" fill="#009432"/></svg></div>
        <div class="acts"><i><svg class="s18" viewBox="0 0 16 16"><path d="M8 15L1 7c-2-5 5-7 7-3 2-4 9-2 7 3z" fill="#fff"/></svg></i><span class="a1">Ajouter à ma sélection</span><i><svg class="s20" viewBox="0 0 20 20"><path d="M4 6V1h12v5M1 7h18v8h-3v-4H4v4H1z" fill="#fff"/><path d="M5 3h10v3H5z"/><path d="M5 12h10v7H5z" fill="#fff"/><path d="M7 14h6M7 16.500h6" stroke="#000"/></svg></i><span>Imprimer</span></div>
      </main>
      <aside>
        <div class="agent"><svg viewBox="0 0 100 100"><path d="M0 0h100v100H0z" fill="#fff"/><path d="M18 90C-8 70-2 24 24 11c20-11 40-9 57 5 24 20 22 56 0 74l-18-10c-4-3-4-7-2-12 6-5 8-12 8-22 3-20-4-27-19-27S29 26 31 46c0 10 2 17 8 22 1 5 0 9-3 12z" fill="#868686"/></svg><div><b>AGENCE LA<br>VELIZIENNE</b><span><svg viewBox="0 0 14 17"><path d="M7 17C2 12 0 9 0 7a7 7 0 0 1 14 0c0 2-2 5-7 10z" fill="#009432"/><circle cx="7" cy="7" r="2.500" fill="#d9d9d9"/></svg>Vélizy-Villacoublay (78140)</span></div></div>
        <div class="tel"><svg viewBox="0 0 10 16"><rect x=".7" y=".7" width="8.600" height="14.600" rx="1.500" fill="none" stroke="#fff" stroke-width="1.400"/><path d="M0 12h10" stroke="#fff"/></svg>Afficher le téléphone</div>
        <div class="f">Votre nom *</div><div class="f">Votre adresse mail *</div><div class="f">Votre Téléphone</div><div class="f ta">Votre message *</div>
        <div class="cg"><i></i>J'accepte les conditions d'utilisation des<br>données (*)</div>
        <div class="send">ENVOYER</div>
        <p class="legal"><em>*Champs obligatoires</em><br>Les informations recueillies sur ce formulaire sont<br>enregistrées dans un fichier informatisé par La Boite<br>Immo agissant comme Sous-traitant du traitement pour la<br>gestion de la clientèle/prospects de l'Agence / du<br>Réseau qui reste Responsable du Traitement de vos<br>Données personnelles.<br>La base légale du traitement repose sur l'intérêt légitime de<br>l'Agence / du Réseau.<br>Elles sont conservées jusqu'à demande de suppression et</p>
      </aside>
    </div>
    <div class="pscroll"><i class="pu"></i><i class="pt"></i><i class="pd"></i></div>
  </div>
</section>

<footer class="taskbar">
  <span class="start"><svg class="s16" viewBox="0 0 16 16"><path d="M0 2l7-1v6.500H0zM8 1l8-1v7.500H8zM0 8.500h7V15l-7-1zM8 8.500h8V16l-8-1z" fill="#fff"/></svg></span>
  <div class="tsearch"><svg class="s16"><use href="#mag"/></svg>Taper ici pour rechercher</div>
  <span class="tv"><svg class="s16" viewBox="0 0 16 16"><path d="M1 0v2h10V0M1 16v-2h10v2M1 5h10v6H1zM14 0v3M14 5v4M14 11v5" fill="none" stroke="#eee" stroke-width="1.300"/></svg></span>
  <div class="apps">
    <span class="run"><svg viewBox="0 0 24 24"><use href="#chrome"/><circle cx="18" cy="17" r="6" fill="#dfe6ee"/><circle cx="18" cy="15" r="2" fill="#567"/><path d="M14 20c1-3 7-3 8 0z" fill="#567"/></svg></span>
    <span class="run"><svg viewBox="0 0 24 24"><path d="M1 3h8l2 2h12v16H1z" fill="#f6c344"/><path d="M1 9h22v12H1z" fill="#ffd869"/><path d="M7 14h10v7h-3v-4h-4v4H7z" fill="#2f8fd8"/></svg></span>
    <span class="run"><svg viewBox="0 0 24 24"><path d="M6 1h17v22H6z" fill="#2b7cd3"/><path d="M6 12h17v11H6z" fill="#185abd"/><path d="M0 6h13v13H0z" fill="#103f91"/><path d="M2.500 9l2 7 2-6 2 6 2-7" fill="none" stroke="#fff" stroke-width="1.500"/></svg></span>
    <span class="run"><svg viewBox="0 0 24 24"><path d="M6 1h17v22H6z" fill="#21a366"/><path d="M6 12h17v11H6z" fill="#185c37"/><path d="M0 6h13v13H0z" fill="#107c41"/><path d="M3 9l6 7M9 9l-6 7" stroke="#fff" stroke-width="1.800"/></svg></span>
    <span class="run"><svg viewBox="0 0 24 24"><path d="M17 0l6 3v18l-6 3L7 14l-5 4-2-2 5-4-5-4 2-2 5 4zM17 7l-6 5 6 5z" fill="#2196e0"/></svg></span>
    <span><svg viewBox="0 0 24 24"><circle cx="12" cy="12" r="11" fill="#6e40aa"/><path d="M12 5c-8 0-7 9-2 10v5h4v-5c5-1 6-10-2-10z" fill="#fff"/></svg></span>
    <span><svg viewBox="0 0 24 24"><circle cx="15" cy="5" r="4" fill="#7b83eb"/><path d="M8 8h15v9c-1 7-13 7-14 1z" fill="#5059c9"/><path d="M0 7h13v12H0z" fill="#4b53bc"/><path d="M3 10h7M6.500 10v7" stroke="#fff" stroke-width="1.800"/></svg></span>
    <span class="run"><svg viewBox="0 0 24 24"><path d="M1 2l15-1 2 12-15 2z" fill="#1430c8" stroke="#ccc" stroke-width="2"/><path d="M7 16h13v6H7z" fill="#ccc"/><path d="M12 16l5 5" stroke="#2a8c2a" stroke-width="2"/></svg></span>
    <span class="run"><svg viewBox="0 0 24 24"><circle cx="12" cy="12" r="11" fill="#fff" stroke="#2a8f8f" stroke-width="2"/><path d="M7 5l7 1 5 8-3 1-4-3-1 9-4-5z" fill="#222"/></svg></span>
    <span class="run"><svg viewBox="0 0 24 24"><path d="M3 1h11l6 6v15H3z" fill="#fff"/><circle cx="16" cy="18" r="6" fill="#111"/><text x="11" y="22" font-size="9" fill="#fff" font-family="Open Sans">12</text></svg></span>
    <span class="run"><svg viewBox="0 0 24 24"><rect width="24" height="24" rx="5" fill="#0b0f14"/><path d="M4 8c0 12 7 12 8 3 1 9 9 7 8-3" fill="none" stroke="#19a8f0" stroke-width="5"/><path d="M4 8c0 6 3 9 5 8" fill="none" stroke="#17c98b" stroke-width="4"/></svg></span>
    <span class="run"><svg viewBox="0 0 24 24"><path d="M6 2l15 2-3 18-16-3z" fill="#a9d4d8"/><path d="M9 5l10 1-3 13-10-2z" fill="#d9eef0"/></svg></span>
    <span class="run"><svg viewBox="0 0 24 24"><path d="M3 9c4-7 14-7 18 0-5-3-13-3-18 0zM3 15c4 7 14 7 18 0-5 3-13 3-18 0z" fill="#f37726"/><circle cx="19" cy="3" r="1.500" fill="#999"/></svg></span>
    <span class="run"><svg viewBox="0 0 24 24"><circle cx="12" cy="14" r="7" fill="none" stroke="#fff" stroke-width="3"/><circle cx="12" cy="14" r="2.500" fill="#fff"/><path d="M5 4c5-4 9-4 14 0" fill="none" stroke="#fff" stroke-width="3"/></svg></span>
    <span class="run"><svg viewBox="0 0 24 24"><use href="#chrome"/><circle cx="18" cy="17" r="6" fill="#345"/><path d="M15 22l2-9 3 9z" fill="#e9c9a8"/></svg></span>
    <span class="run act"><svg viewBox="0 0 24 24"><use href="#chrome"/><circle cx="18" cy="17" r="6" fill="#5d4037"/><circle cx="18" cy="17" r="1.800" fill="none" stroke="#ddd"/></svg></span>
    <span class="run"><svg viewBox="0 0 24 24"><circle cx="12" cy="12" r="11.500" fill="#e9efe2"/><path d="M1 9a11.500 11.500 0 0 1 22 0z" fill="#58a618"/><text x="4" y="17" font-size="12" font-weight="700" font-family="Open Sans">HS</text></svg></span>
    <span class="run"><svg viewBox="0 0 24 24"><path d="M0 0h5v9h13V0h6v24h-6v-9H5v9H0z" fill="#9a97d0"/><path d="M2 9h20v6H2z" fill="#0a0a0a"/></svg></span>
    <span class="run"><svg viewBox="0 0 24 24"><rect x="1" y="1" width="22" height="22" fill="#001d33" stroke="#31c5f0" stroke-width="1.600"/><text x="4" y="16" font-size="12" fill="#31c5f0" font-family="Open Sans">Ps</text></svg></span>
    <span class="run"><svg viewBox="0 0 24 24"><ellipse cx="12" cy="8" rx="10" ry="7" fill="#f3e6e6" stroke="#c33" stroke-width="1.500" transform="rotate(-20 12 8)"/><path d="M14 10l7 10M18 12l-3 9" stroke="#2583c5" stroke-width="2.500"/></svg></span>
    <span class="run"><svg viewBox="0 0 24 24"><path d="M3 0h18v24H3z" fill="#8796a5"/><path d="M5 2h14v5H5z" fill="#3ec6ee"/><path d="M6 10h3v3H6zM11 10h3v3h-3zM6 15h3v3H6zM11 15h3v3h-3z" fill="#fff"/><path d="M16 10h3v11h-3z" fill="#155c98"/></svg></span>
    <span class="run"><svg viewBox="0 0 24 24"><rect x="1" y="3" width="22" height="18" rx="2" fill="#58bdf5"/><circle cx="8" cy="10" r="4" fill="#fff"/><path d="M8 6v4h4z" fill="#f39c12"/><path d="M14 7h7M14 10h7M4 17h16" stroke="#fff" stroke-width="2"/></svg></span>
  </div>
  <div class="tray">
    <svg class="wx" viewBox="0 0 26 24"><circle cx="12" cy="14" r="9" fill="#f28c1c"/><ellipse cx="8" cy="7" rx="8" ry="5" fill="#9ec5f0"/><ellipse cx="19" cy="19" rx="7" ry="4" fill="#b9d4f3"/><circle cx="20" cy="7" r="6.500" fill="#c42b1c"/><text x="18" y="10" font-size="9" fill="#fff" font-family="Open Sans">1</text></svg>
    <span class="temp">23°C&nbsp; Eclaircies</span>
    <svg class="t1" viewBox="0 0 14 8"><path d="M1 7l6-6 6 6" fill="none" stroke="#fff" stroke-width="1.400"/></svg>
    <svg class="t2 s16" viewBox="0 0 16 16"><path d="M4 2h11v9H4M9 11v3M6 14h7M1 1h4v4H1zM3 5v10" fill="none" stroke="#fff" stroke-width="1.200"/></svg>
    <svg class="t3 s16" viewBox="0 0 16 16"><path d="M1 5h3l4-4v14l-4-4H1zM10 6l5 5M15 6l-5 5" fill="none" stroke="#fff" stroke-width="1.200"/></svg>
    <div class="clock">14:46<br>26/09/2023</div>
    <svg class="nt" viewBox="0 0 22 24"><path d="M0 1h18v13h-9l-4 4v-4H0z" fill="#fff"/><path d="M3 5h12M3 8h12" stroke="#222"/><circle cx="15" cy="16" r="7" fill="#333" stroke="#999"/><text x="12.500" y="20" font-size="10" fill="#fff" font-family="Open Sans">1</text></svg>
  </div>
</footer>
</div>
<script src="app.js"></script>
</body>
</html>
```
FILE: styles.css
```css
* { box-sizing: border-box; }
html { overflow: hidden; }
body { margin: 0; height: 1600px; background: #fff; font-family: "Open Sans", "Noto Sans", sans-serif; font-size: 12px; color: #262626; overflow: hidden; }
.defs { position: absolute; width: 0; height: 0; }
svg { display: block; flex: none; overflow: visible; }
button { font: inherit; }
.desktop { position: relative; width: 3840px; height: 1600px; overflow: hidden; }
.s10 { width: 10px; height: 10px; } .s12 { width: 12px; height: 12px; } .s14 { width: 14px; height: 14px; }
.s16 { width: 16px; height: 16px; } .s18 { width: 18px; height: 18px; } .s20 { width: 20px; height: 20px; }
.c10 { width: 10px; height: 6px; color: #444; } .c7 { width: 7px; height: 4px; } .gr { color: #bbb; }

/* spreadsheet window */
.excel { display: flex; flex-direction: column; width: 3840px; height: 1560px; background: #efefef; }
.xl-title { display: flex; height: 48px; align-items: center; color: #b6b6b6; letter-spacing: -.25px; flex: none; }
.xl-quick { display: flex; align-items: center; width: 1693px; padding-left: 16px; }
.xl-logo { width: 16px; height: 16px; }
.auto { width: 151px; margin-left: 16px; white-space: nowrap; letter-spacing: -.5px; }
.toggle { width: 41px; height: 20px; margin-left: 7px; border: 1px solid #bbb; border-radius: 10px; background: radial-gradient(circle at 10px 9px, #b9b9b9 6.5px, #fff 7px); }
.q-save { width: 16px; height: 16px; margin-left: 13px; }
.q-undo, .q-redo { width: 26px; height: 16px; margin-left: 14px; }
.q-more { width: 8px; height: 8px; margin-left: 15px; }
.fname { width: 201px; margin: 0 6px 0 25px; white-space: nowrap; letter-spacing: -.6px; }
.xl-search { display: flex; align-items: center; width: 469px; height: 33px; padding-left: 21px; gap: 14px; border: 1px solid #d2d2d2; border-bottom: 2px solid #c6c6c6; border-radius: 4px; background: #f0f0f0; }
.xl-user { display: flex; align-items: center; width: 127px; height: 48px; margin-left: 1406px; padding-left: 16px; gap: 6px; background: #fff; color: #333; border-radius: 4px; letter-spacing: -.4px; }
.xl-user b { width: 25px; height: 25px; border-radius: 50%; background: #d13438; color: #fff; font-weight: 400; font-size: 10px; text-align: center; line-height: 25px; }
.xl-user span { width: 70px; white-space: nowrap; }
.xl-ctl { display: flex; gap: 35px; margin-left: 19px; }
.xl-tabs { display: flex; height: 30px; padding-left: 12px; gap: 21px; line-height: 30px; font-size: 12.5px; flex: none; }
.xl-tabs .on { position: relative; }
.xl-tabs .on::after { content: ""; position: absolute; left: 0; right: 0; bottom: 3px; height: 2px; background: #107c41; }
.xl-share { display: flex; gap: 7px; margin: 3px 12px 0 auto; }
.xl-share button { display: flex; align-items: center; gap: 5px; height: 24px; padding: 0 8px; border-radius: 4px; font-size: 12px; letter-spacing: -.35px; }
.xl-share button svg:first-child { width: 12px; height: 12px; }
.cmt { width: 118px; border: 1px solid #8a8a8a; background: #fff; color: #262626; }
.shr { width: 98px; border: 0; background: #107c41; color: #fff; }
.shr .c7 { margin-left: 7px; }
.ribbon { display: flex; width: 3823px; height: 100px; margin-left: 8px; background: #fff; border-radius: 7px; box-shadow: 0 1px 3px rgba(0,0,0,.3); flex: none; }
.grp { position: relative; height: 89px; margin-top: 5px; border-right: 1px solid #d4d4d4; }
.grp p { margin: 0; text-align: center; line-height: 14px; font-size: 11.5px; letter-spacing: -.3px; }
.grp .items { display: flex; align-items: flex-start; height: 78px; }
.g1 { width: 464px; } .g1 .items { padding-left: 8px; }
.g2 { width: 233px; }
.g3 { width: 237px; } .g4 { width: 506px; } .g4 .items { padding-left: 2px; }
.g5 { width: 138px; } .g5 .items { padding-left: 6px; }
.g6 { width: 287px; } .g6 .items { padding-left: 5px; } .g6 p { padding-right: 16px; }
.b { padding-top: 4px; text-align: center; line-height: 16px; white-space: nowrap; font-size: 12px; letter-spacing: -.4px; }
.b > svg { width: 28px; height: 30px; margin: 0 auto 3px; }
.b > .dd { display: inline-block; width: 7px; height: 4px; margin: 0; vertical-align: 2px; color: #333; }
.b-get { width: 73px; } .b-csv { width: 90px; } .b-web { width: 52px; } .b-tab { width: 98px; } .b-rec { width: 58px; } .b-con { width: 80px; }
.b-ref { width: 71px; } .b-sort { width: 50px; } .b-fil { width: 54px; }
.b-cv { width: 64px; } .b-fl { width: 66px; } .b-du { width: 80px; } .b-va { width: 74px; } .b-cs { width: 64px; margin-left: 4px; } .b-rl { width: 48px; margin-left: 3px; } .b-md { width: 92px; margin-left: 3px; }
.b-an { width: 66px; } .b-fe { width: 58px; } .b-gr { width: 52px; } .b-st { width: 46px; }
.off { color: #b4b4b4; }
.vs { width: 1px; background: #d4d4d4; margin: 6px 1px 0; } .short { height: 41px; } .mid { height: 62px; }
.list { display: flex; flex-direction: column; letter-spacing: -.35px; white-space: nowrap; margin-top: -1px; }
.list span { display: flex; align-items: center; gap: 4px; height: 26px; }
.list svg { width: 16px; height: 16px; }
.g6 .list { margin-left: 5px; }
.az { display: grid; grid-template-columns: 9px 8px; width: 30px; padding: 9px 0 0 12px; row-gap: 8px; font-size: 10.5px; line-height: 12px; }
.az em { font-style: normal; color: #1e8bcd; } .az u { text-decoration: none; font-size: 15px; line-height: 26px; }
.launch { position: absolute; right: 1px; bottom: 0; width: 10px; height: 10px; }
.fold { margin: 84px 9px 0 auto; }
.fbar { display: flex; height: 26px; margin: 8px 9px 0 8px; flex: none; }
.nbox, .fx, .finput { background: #fff; border: 1px solid #cfcfcf; border-radius: 4px; display: flex; align-items: center; }
.nbox { width: 102px; justify-content: flex-end; padding-right: 5px; }
.dots { width: 20px; text-align: center; line-height: 24px; font-weight: 700; }
.fx { width: 74px; justify-content: space-around; color: #bbb; }
.fx i { font: italic 17px "Liberation Serif", serif; color: #222; }
.finput { flex: 1; margin-left: 4px; justify-content: flex-end; padding-right: 2px; }
.sheet { position: relative; height: 1286px; margin-top: 8px; overflow: hidden; flex: none; font-family: Lato, "Open Sans", sans-serif; font-size: 12.7px; color: #111; }
.colhead { display: flex; height: 19px; padding-left: 32px; border-bottom: 1px solid #a8a8a8; width: 3818px; overflow: hidden; }
.colhead span { width: 64px; flex: none; text-align: center; line-height: 19px; color: #555; border-left: 1px solid #d0d0d0; }
.colhead .wB { width: 202px; } .colhead .wC { width: 172px; } .colhead .end { width: 20px; }
.rows { width: 3818px; height: 1267px; overflow: hidden; background: repeating-linear-gradient(90deg, #e1e1e1 0 1px, transparent 1px 64px) 22px 0, repeating-linear-gradient(180deg, transparent 0 19px, #e1e1e1 19px 20px) 0 0, #fff; }
.row { display: flex; height: 20px; letter-spacing: -.28px; line-height: 21px; width: 1623px; background: #fff; }
.row > * { width: 64px; flex: none; overflow: hidden; white-space: nowrap; padding: 0 2px 0 3px; border-bottom: 1px solid #e1e1e1; border-left: 1px solid #e1e1e1; }
.row > .n { width: 32px; background: #efefef; color: #2020ee; border-left: 0; text-align: right; padding: 0 2px 0 0; border-bottom-color: #ddd; }
.row > .a { font-weight: 700; text-align: center; border-bottom-color: #000; border-left-color: #888; }
.row > .d { width: 202px; border-left-color: #000; }
.row > .c { width: 172px; }
.r { text-align: right; }
.row > .j { letter-spacing: .35px; }
.row > .k { letter-spacing: .1px; padding-left: 2px; }
.row > .m { width: 128px; }
.row > .last { border-right: 1px solid #e1e1e1; width: 65px; }
.row.head { font-weight: 700; line-height: 21px; }
.row.head > .h { position: relative; display: flex; justify-content: center; border-color: #000; padding: 0; letter-spacing: -.15px; }
.row.head > .h::after { content: ""; position: absolute; right: 0; top: 2px; width: 17px; height: 17px; border: 1px solid #a3aab4; background: linear-gradient(#fcfcfd, #eceef1); }
.row.head > .h::before { content: ""; position: absolute; z-index: 1; right: 5px; top: 8px; border: 4px solid transparent; border-top: 5px solid #555; }
.row.head > .n { color: #b5723c; font-weight: 400; text-align: center; }
.vscroll { position: absolute; right: 0; top: 0; width: 22px; height: 1286px; background: #f3f3f3; }
.vscroll .up { position: absolute; left: 6px; top: 7px; border: 5px solid transparent; border-bottom: 6px solid #666; border-top: 0; }
.vscroll .thumb { position: absolute; left: 7px; top: 18px; width: 9px; height: 700px; border-radius: 5px; background: #6f6f6f; }
.sheets { display: flex; height: 32px; border-top: 1px solid #c9c9c9; align-items: center; padding-left: 28px; flex: none; }
.sheets .ar { width: 6px; height: 11px; margin-right: 26px; }
.sheets b { width: 57px; height: 28px; margin: -3px 0 0 24px; background: #fff; text-align: center; line-height: 24px; border-radius: 0 0 5px 5px; box-shadow: 0 1px 2px #bbb; letter-spacing: -.5px; text-decoration: underline #107c41 2px; text-underline-offset: 5px; }
.sheets .add { margin-left: 46px; width: 12px; height: 12px; }
.sdots { margin-left: 2071px; width: 6px; font-weight: 700; }
.sheets .left { border: 4px solid transparent; border-right: 7px solid #555; border-left: 0; margin-left: 10px; }
.hthumb { width: 800px; height: 9px; margin-left: 9px; background: #6f6f6f; border-radius: 5px; }
.status { display: flex; height: 22px; border-top: 1px solid #fff; background: #f3f3f3; align-items: center; padding-left: 7px; letter-spacing: -.45px; font-size: 11.5px; flex: none; }
.pret { width: 40px; } .acc { width: 14px; height: 14px; margin-right: 4px; }
.zoom { display: flex; align-items: center; margin-left: auto; height: 21px; padding-right: 8px; }
.v { width: 41px; height: 21px; display: flex; align-items: center; justify-content: center; } .v.on { background: #dedede; }
.mn, .pl { width: 16px; font-size: 16px; text-align: center; }
.track { width: 100px; height: 12px; background: linear-gradient(#666, #666) 48px 0/4px 12px no-repeat, linear-gradient(#777, #777) 0 6px/100px 1px no-repeat; }
.pc { margin-left: 12px; width: 32px; white-space: nowrap; }

/* file explorer */
.explorer { position: absolute; left: 2428px; top: 518px; width: 1412px; height: 1020px; background: #fff; border: 1px solid #9c9c9c; box-shadow: 0 2px 12px rgba(0,0,0,.35); display: flex; flex-direction: column; }
.ex-title { display: flex; justify-content: flex-end; gap: 34px; padding: 8px 16px 0 0; height: 30px; color: #777; }
.ex-help { display: flex; justify-content: flex-end; align-items: center; height: 24px; border-bottom: 1px solid #dcdcdc; padding: 0 2px 0 310px; gap: 10px; margin-top: -1px; }
.ex-help em { margin: -24px auto 0 0; background: #dcd774; font-style: normal; height: 26px; line-height: 24px; padding: 0 3px; }
.ex-help b { width: 16px; height: 16px; border-radius: 50%; background: #0a63c2; color: #fff; text-align: center; line-height: 16px; font-size: 11px; }
.ex-help .c10 { color: #999; }
.ex-bar { display: flex; height: 46px; padding: 6px 12px 10px 310px; gap: 13px; }
.addr { flex: 1; display: flex; border: 1px solid #d9d9d9; justify-content: flex-end; align-items: center; height: 30px; }
.addr span { width: 30px; height: 28px; margin-left: 9px; border-left: 1px solid #d9d9d9; display: flex; align-items: center; justify-content: center; color: #666; }
.ex-search { width: 201px; height: 30px; border: 1px solid #d9d9d9; display: flex; align-items: center; justify-content: space-between; padding: 0 7px 0 8px; color: #6d6d6d; letter-spacing: -.35px; }
.ex-body { display: flex; flex: 1; }
.ex-nav { width: 319px; border-right: 1px solid #eee; display: flex; flex-direction: column; justify-content: flex-end; padding: 0 0 25px 24px; color: #111; letter-spacing: -.4px; }
.ex-nav span { display: flex; align-items: center; gap: 5px; height: 32px; } .ex-nav svg { width: 16px; height: 16px; }
.files { display: grid; grid-template-columns: repeat(5, 107px); grid-auto-rows: 162px; margin-left: 549px; padding-top: 7px; align-content: start; color: #111; letter-spacing: -.3px; line-height: 15px; text-align: center; white-space: nowrap; }
.files svg { width: 72px; height: 89px; margin: 0 auto 4px; }
.ex-status { display: flex; align-items: center; height: 23px; padding: 0 4px 0 14px; color: #1c3c5c; letter-spacing: -.35px; }
.cnt { border-right: 1px solid #e2e2e2; padding-right: 9px; margin-right: auto; }
.sel { width: 22px; height: 22px; margin-left: 4px; background: #c8e6f7; border: 1px solid #3ba1dc; display: flex; align-items: center; justify-content: center; }

/* calculator */
.calc { position: absolute; left: 2753px; top: 486px; width: 640px; height: 656px; background: #f2f2f2; border: 1px solid #9a9a9a; box-shadow: 0 3px 14px rgba(0,0,0,.35); }
.ca-title { display: flex; align-items: center; height: 34px; padding: 0 17px 0 20px; color: #555; letter-spacing: -.3px; }
.ca-title span { margin-left: 17px; color: #111; } .ca-ico { width: 11px; height: 14px; }
.ca-title .first { margin-left: auto; } .ca-title .s12 + .s12 { margin-left: 34px; }
.ca-main { display: flex; }
.ca-left { width: 361px; padding-left: 5px; }
.ca-mode { display: flex; align-items: center; height: 44px; padding-left: 11px; } .ca-mode .s16 { height: 12px; }
.ca-mode b { font-size: 19px; font-weight: 600; margin: 0 21px 0 15px; width: 82px; letter-spacing: -.5px; }
.ca-disp { height: 127px; line-height: 126px; font-size: 46px; font-weight: 600; text-align: right; padding-right: 9px; color: #000; }
.ca-mem { display: flex; height: 42px; align-items: center; font-size: 12px; } .ca-mem span { width: 71.5px; text-align: center; }
.keys { display: grid; grid-template-columns: repeat(4, 1fr); grid-auto-rows: 64.5px; gap: 3px 4px; }
.keys span { background: #fff; border: 1px solid #e2e2e2; border-bottom-color: #c9c9c9; border-radius: 4px; display: flex; align-items: center; justify-content: center; font-size: 17px; color: #222; }
.keys .op { background: #f9f9f9; } .keys .sm { font-size: 13.5px; } .keys .eq { background: #005a9e; border-color: #005a9e; }
.keys .it { font-family: "Liberation Serif", serif; font-style: italic; } .keys sup { font-size: 10px; margin-top: -8px; font-style: normal; }
.ca-hist { width: 277px; padding-right: 20px; text-align: right; }
.ca-tabs { display: flex; gap: 24px; height: 44px; padding-left: 16px; line-height: 40px; font-size: 14px; letter-spacing: -.4px; margin-bottom: 12px; }
.ca-tabs .on { position: relative; } .ca-tabs .on::after { content: ""; position: absolute; left: 24px; bottom: 4px; width: 16px; height: 3px; border-radius: 2px; background: #005a9e; }
.ca-hist p { margin: 0; height: 26px; line-height: 24px; font-size: 13.5px; color: #6a6a6a; word-spacing: .9px; }
.ca-hist strong { display: block; height: 56px; line-height: 30px; font-size: 18.5px; font-weight: 600; letter-spacing: -.5px; }
.key { position: absolute; background: #767676; color: #fff; font-style: normal; text-align: center; height: 24px; line-height: 24px; }
.k-m { left: 484px; top: 19px; width: 19px; } .k-h { left: 16px; top: 75px; width: 17px; } .k-c { left: 606px; top: 590px; width: 16px; }
.trash { position: absolute; left: 607px; top: 623px; width: 14px; height: 14px; }
.tip { position: absolute; left: 3292px; top: 1116px; width: 250px; height: 25px; background: #fff; border: 1px solid #bbb; color: #575757; line-height: 23px; padding-left: 4px; white-space: nowrap; letter-spacing: -.4px; }

/* browser window */
.chrome { position: absolute; left: 1227px; top: 418px; width: 1521px; height: 1010px; background: #fff; box-shadow: 0 4px 18px rgba(0,0,0,.45), 0 0 0 1px #555; display: flex; flex-direction: column; overflow: hidden; }
.tabs { display: flex; height: 43px; background: #000; padding: 9px 0 0 8px; flex: none; }
.fi { width: 19px; height: 34px; padding: 8px 0 8px 2px; background: linear-gradient(#555, #555) right 8px/1px 19px no-repeat; }
.fi svg { width: 14px; height: 18px; color: #5f6368; }
.fi.nn { width: 18px; }
.tabs .act { width: 33px; height: 34px; margin-left: 20px; background: #2d2d2d; border-radius: 9px 9px 0 0; color: #ddd; display: flex; align-items: center; justify-content: center; }
.tabs .new { width: 30px; color: #fff; font-size: 22px; font-weight: 400; text-align: center; line-height: 33px; margin-left: 5px; }
.wc { order: 9; margin: 0 17px 0 auto; display: flex; gap: 34px; color: #eee; padding-top: 1px; } .wc .c10 { color: #ddd; margin-top: 4px; }
.tool { display: flex; height: 42px; padding: 0 0 0 14px; background: #2d2d2d; align-items: center; gap: 16px; color: #e0e0e0; letter-spacing: -.1px; flex: none; }
.flip { transform: scaleX(-1); }
.url { display: flex; align-items: center; width: 1015px; height: 34px; border-radius: 17px; background: #3c3c3c; color: #9aa0a6; padding: 0 9px 0 12px; font-size: 13.5px; gap: 16px; margin-left: -2px; }
.url span { margin-left: -5px; letter-spacing: 0; } .url b { color: #fff; font-weight: 400; } .url .g { margin-left: auto; } .lock { width: 10px; height: 13px; }
.exts { display: flex; gap: 17px; align-items: center; width: 242px; }
.prof { width: 90px; height: 28px; margin-left: -8px; border: 1px solid #8ab4f8; border-radius: 14px; color: #a8c7fa; display: flex; align-items: center; gap: 8px; padding-left: 4px; letter-spacing: -.6px; white-space: nowrap; }
.prof i { width: 20px; height: 20px; border-radius: 50%; background: #5d4037; color: #eee; text-align: center; line-height: 18px; font-style: normal; }
.menu { font-size: 20px; font-weight: 700; margin-left: -4px; }
.marks { display: flex; height: 33px; background: #2d2d2d; border-bottom: 1px solid #555; color: #eee; align-items: center; padding: 0 14px 4px; letter-spacing: -.2px; flex: none; }
.marks svg { width: 15px; height: 15px; margin-right: 8px; color: #bbb; } .m1 { width: 125px; } .m2 { width: 66px; margin-left: 2px; }
.fav { margin-left: auto; display: flex; align-items: center; border-left: 1px solid #5a5a5a; padding-left: 11px; height: 16px; }
.page { position: relative; flex: 1; overflow: hidden; font-family: "Liberation Serif", serif; color: #333; letter-spacing: .35px; }
.site { position: relative; z-index: 1; display: flex; width: 1503px; height: 60px; padding: 6px 0 0 341px; background: #fff; box-shadow: 0 3px 10px rgba(0,0,0,.2); font-size: 17.5px; line-height: 50px; gap: 40px; letter-spacing: .45px; }
.site b { width: 121px; height: 44px; margin-left: -20px; background: #009432; color: #fff; text-align: center; line-height: 44px; letter-spacing: 0; }
.cols { display: flex; padding-left: 127px; margin-top: -14px; }
main { width: 823px; }
h1 { margin: 0; font: italic bold 35px/40px "Liberation Serif", serif; color: #000; letter-spacing: 0; }
h2 { margin: 0; font: italic bold 25px/30px "Liberation Serif", serif; color: #009432; letter-spacing: 0; }
h1 + h2 { margin-top: 42px; }
.desc { margin: 18px 0 20px; font-size: 18.8px; line-height: 26.2px; white-space: nowrap; }
.l1 { letter-spacing: .05px; } .l2 { letter-spacing: .48px; } .l3 { letter-spacing: .44px; } .l4 { letter-spacing: .56px; } .l5 { letter-spacing: .57px; }
.ptabs { display: flex; gap: 10px; margin-top: 18px; font-size: 17.5px; }
.ptabs span { flex: 1; height: 46px; border: 1px solid #000; text-align: center; line-height: 44px; } .ptabs .on { background: #009432; border-color: #009432; color: #fff; font-weight: 700; letter-spacing: 0; }
.feat { display: flex; margin: 20px 0 24px; font-size: 17.5px; line-height: 24px; height: 116px; }
.feat ul { list-style: none; margin: 0; padding: 0; width: 411px; white-space: nowrap; } .feat li { position: relative; padding-left: 23px; margin-bottom: 10px; }
.feat li::before { content: ""; position: absolute; left: 0; top: 8px; width: 8px; height: 8px; background: #009432; }
.share { display: flex; align-items: center; height: 30px; margin: 18px 0 20px; color: #009432; font-size: 21.5px; letter-spacing: .5px; } .fb { width: 10px; height: 18px; margin-left: 13px; } .tw { width: 17px; height: 15px; margin: -8px 0 0 24px; }
.acts { display: flex; align-items: center; font-size: 17.5px; letter-spacing: .42px; } .acts i { width: 40px; height: 40px; background: #000; display: flex; align-items: center; justify-content: center; margin-right: 14px; } .a1 { width: 186px; white-space: nowrap; }
aside { width: 395px; height: 900px; margin: 78px 0 0 30px; background: #d9d9d9; border: 1px solid #777; padding: 15px; }
.agent { display: flex; gap: 15px; } .agent > svg { width: 100px; height: 100px; }
.agent b { display: block; color: #009432; font-size: 19px; line-height: 30px; letter-spacing: .1px; } .agent span { display: flex; align-items: center; gap: 3px; font-size: 17px; line-height: 24px; white-space: nowrap; padding-left: 3px; letter-spacing: 0; } .agent span svg { width: 14px; height: 17px; }
.tel { width: 250px; height: 45px; margin: 15px auto 43px; background: #000; color: #fff; display: flex; align-items: center; justify-content: center; gap: 8px; font-size: 17px; font-weight: 600; letter-spacing: 0; } .tel svg { width: 10px; height: 16px; }
.f { height: 47.5px; border-bottom: 1px solid #666; font-size: 19px; line-height: 49px; } .ta { height: 72.5px; }
.cg { margin-top: 26px; font-size: 19px; line-height: 26px; white-space: nowrap; letter-spacing: .5px; } .cg i { display: inline-block; width: 13px; height: 13px; border: 1px solid #767676; border-radius: 2px; background: #fff; margin-right: 4px; }
.send { height: 42px; margin-top: 10px; background: #000; color: #fff; font-size: 14px; font-weight: 700; text-align: center; line-height: 42px; letter-spacing: 1.2px; }
.legal { margin: 18px 0 0; font-size: 14.3px; line-height: 19.5px; white-space: nowrap; }
.pscroll { position: absolute; right: 0; top: 0; width: 18px; height: 100%; background: #f1f1f1; z-index: 2; }
.pt { position: absolute; left: 2px; top: 343px; width: 13px; height: 255px; background: #c1c1c1; }
.pu, .pd { position: absolute; left: 5px; border: 4px solid transparent; } .pu { top: 6px; border-bottom: 5px solid #505050; border-top: 0; } .pd { bottom: 7px; border-top: 5px solid #505050; border-bottom: 0; }

/* taskbar */
.taskbar { display: flex; align-items: center; width: 3840px; height: 40px; background: linear-gradient(90deg, #1f1f1f 0, #202020 1200px, #2b2725 1500px, #262626 1800px, #232323 2200px, #3a3431 2400px, #3a3431 2440px, #232425 2540px, #262a29 2900px, #1c1c1c 3200px); color: #eee; }
.start { width: 48px; padding-left: 15px; }
.tsearch { display: flex; align-items: center; gap: 12px; width: 288px; height: 39px; padding-left: 12px; background: #f3f2f1; color: #444; font-size: 14px; letter-spacing: -.4px; }
.tv { width: 51px; padding-left: 17px; }
.apps { display: flex; gap: 1px; }
.apps span { width: 48px; height: 40px; display: flex; align-items: center; justify-content: center; } .apps svg { width: 24px; height: 24px; }
.apps .run { background: linear-gradient(#76b9ed, #76b9ed) 4px 38px/40px 2px no-repeat; }
.apps .act { background: linear-gradient(#76b9ed, #76b9ed) 0 38px/48px 2px no-repeat, #4b4b4b; }
.tray { display: flex; align-items: center; margin-left: auto; width: 340px; white-space: nowrap; font-size: 13px; letter-spacing: -.4px; }
.wx { width: 26px; height: 24px; } .temp { width: 93px; margin-left: 7px; letter-spacing: -.5px; }
.t1 { width: 13px; height: 8px; margin-left: 24px; } .t2 { margin-left: 10px; } .t3 { margin-left: 7px; }
.clock { width: 62px; margin-left: 9px; text-align: center; font-size: 12px; line-height: 18px; } .nt { width: 20px; height: 24px; margin-left: 15px; }
```
FILE: app.js
```javascript
const cols = [];
for (let i = 0; i < 55; i++) cols.push(i < 26 ? String.fromCharCode(65 + i) : String.fromCharCode(64 + Math.floor(i / 26)) + String.fromCharCode(65 + i % 26));
document.getElementById('colhead').innerHTML = cols.map(c => `<span class="w${c}">${c}</span>`).join('') + '<span class="end"></span>';

// index, day, cell name, value, count, hits (when it differs)
const data = `2552 08-28 26004_001-73 2,546875 4
2553 08-28 26004_001-83 3,130396 4
2554 08-28 26005_002-63 3,125271 4
2555 09-04 26005_002-73 3,185557 3
2556 08-28 26005_002-83 3,462574 4
2557 08-28 26020_001-61 3,21508 3
2558 09-04 26026_001-62 10,5464 3
2559 08-28 26026_001-72 3,864303 4
2560 08-28 26026_001-82 2,568547 4
2561 09-04 26038_001-52 2,549413 3
2563 08-28 26041_001-71 2,587 4
2564 09-11 26041_001-72 3,366324 2
2565 09-04 26041_001-82 6,612906 3
2567 08-28 26052_001-72 4,325867 4
2568 08-28 26052_001-82 3,869735 4
2570 08-28 26057_001-73 3,228589 4
2571 09-04 26057_003-51 2,79409 3
2572 09-04 26057_003-81 3,622998 3
2574 09-11 26058_002-53 8,680882 2
2575 09-11 26058_002-72 2,503334 2
2576 09-04 26058_006-72 2,888261 3
2579 08-28 26068_001-51 4,522536 4
2580 08-28 26068_001-72 2,774672 4
2581 08-28 26068_001-81 7,611318 4
2582 08-28 26074_001-61 1,910041 4
2583 09-11 26074_001-62 2,501569 2
2585 09-04 26074_001-71 3,121173 3
2586 08-28 26074_001-73 2,989714 4
2587 08-28 26074_001-72 2,64753 4
2588 09-04 26074_001-82 3,801891 3
2589 09-04 26084_001-72 4,787745 3
2590 08-28 26088_001-71 3,159248 4
2591 09-11 26088_004-72 3,426213 2
2592 09-04 26110_001-52 3,657727 3
2593 08-28 26110_001-72 3,03597 4
2594 09-04 26110_001-82 4,046189 3
2595 08-28 26114_001-61 3,031801 4
2596 08-28 26114_001-63 3,234651 4
2597 08-28 26114_001-71 3,866375 4
2598 08-28 26114_001-73 3,138829 4
2599 08-28 26114_001-81 5,920182 4
2600 08-28 26114_001-83 3,099426 4
2601 09-11 26116_004-72 3,616972 2
2602 09-04 26116_004-82 4,949879 3
2603 08-28 26124_001-81 3,93391 4
2604 08-28 26124_002-63 2,643963 4
2606 09-04 26124_003-81 2,665194 3
2607 09-04 26125_001-72 2,849494 3
2608 09-04 26143_001-82 7,081692 3
2609 08-28 26144_002-53 2,868915 4
2610 08-28 26144_001-62 3,510895 4
2612 09-04 26145_001-73 3,377642 3
2613 09-04 26155_002-71 2,977393 3
2614 09-04 26155_002-81 2,529732 3
2615 08-28 26156_001-62 3,105571 4
2616 08-28 26156_001-72 3,309144 4
2617 08-28 26156_001-82 3,658188 4
2618 08-28 26172_002-71 3,148944 4
2619 09-04 26172_002-72 3,847565 3
2620 09-04 26172_002-81 5,121592 3
2621 09-04 26172_002-82 4,320597 3
2622 09-11 26176_001-72 3,324411 2
2623 08-28 26177_001-62 3,746155 4`.split('\n').map(l => l.split(' '));
const uuid = { '08-28': '52d2554d-4', '09-04': '1dfdae81-4', '09-11': 'ce3ca20c-4' };
const heads = ['', 'PERIOD_START_TIME', 'LNCEL_name', 'kpis_name', 'ratio', 'valeurs', 'nombre_kpis', 'count', 'zones', 'dep', 'key', 'worst', 'Date_MAJ', 'Date_Mesure', 'statut', 'comment', 'title', 'value_stage', 'user_name', 'uuid', 'TYPE'];
let html = '<div class="row head"><span class="n">1</span>' + heads.map((h, i) => `<span class="h ${i === 1 ? 'd' : i === 2 ? 'c' : i === 20 ? 'last' : ''}">${h}</span>`).join('') + '</div>';
data.forEach((r, i) => {
  const [a, d, c, v, n, n2] = r;
  html += `<div class="row"><span class="n">${2133 + i}</span><span class="a">${a}</span><span class="d r">2023-${d} 00:00:00</span><span class="c">${c}</span><span>coi</span><span>kpis</span><span class="r">${v}</span><span class="r">${n}</span><span class="r">${n2 || n}</span><span>Z02_Sud</span><span class="j">26','38','73'</span><span class="k">coi_${c}</span><span class="r">1</span><span class="m">2023_09_26</span><span>Nouveau</span><span></span><span></span><span class="r">0</span><span></span><span>${uuid[d]}</span><span class="last">MACRO</span></div>`;
});
document.getElementById('rows').innerHTML = html;

const use = id => id ? `<svg><use href="#${id}"/></svg>` : '';
const a = 'dart bolt bolt google google gptd gptl octo google globe globe google globe yel redp grn grl wteal - - -'.split(' ');
const b = 'globe grl google bear google brown brown flame pics brown google opera inf pics drive drive globe globe chromeg drive globe outl globe google box wp google mgr acro google globe google white stack fblue shield yt octo ring ring hlogo -'.split(' ');
const tab = (id, cls) => `<div class="fi ${cls}">${use(id === '-' ? '' : id)}</div>`;
document.getElementById('tabs').insertAdjacentHTML('afterbegin',
  a.map(i => tab(i, '')).join('') + b.map(i => tab(i, 'nn')).join('') +
  '<div class="act"><svg class="s10"><use href="#x"/></svg></div>' + tab('google', 'nn') + tab('heart', 'nn') + '<div class="new">+</div>');

const files = ['AW_logement_Et<br>_Justificatifs_Pay<br>ment.pdf', 'AW_logement_Et<br>_Justificatifs_Pay<br>ment-5.pdf', 'BULLETIN_DE_PAI<br>E__202301.pdf', 'BULLETIN_DE_PAI<br>E__202302.pdf', 'BULLETIN_DE_PAI<br>E__202303.pdf',
  'Attestation AW Al<br>assane 2023 p<br>.pdf', 'carte.pdf', 'CERFA<br>Apprentissage -<br>AW Alassane -<br>signé.pdf', 'Document01-1-6<br>-1-4.pdf', 'documents_loge<br>ment.pdf', '', 'VisaCertifie-V109<br>50429590.pdf'];
document.getElementById('files').innerHTML = files.map(f => f ? `<div>${use('pdf')}${f}</div>` : '<div></div>').join('');
```
